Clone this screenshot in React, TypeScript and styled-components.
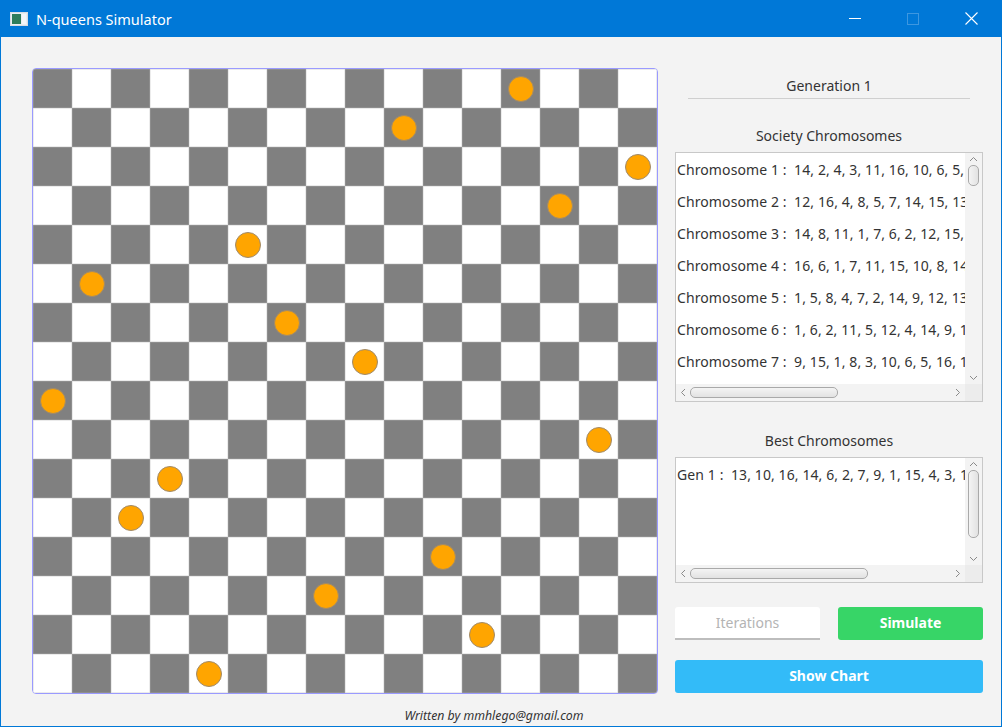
import React from "react";
import styled, { createGlobalStyle } from "styled-components";

const GlobalStyle = createGlobalStyle`
    html, body {
        margin: 0;
        padding: 0;
        background: #f3f3f3;
    }
    * {
        box-sizing: border-box;
    }
`

const Window = styled.div`
    width: 1002px;
    height: 727px;
    display: flex;
    flex-direction: column;
    background: #f3f3f3;
    border: 1px solid #0078d7;
    border-top: none;
    font-family: "Noto Sans", "Open Sans", sans-serif;
    color: #333;
    overflow: hidden;
`

const TitleBar = styled.div`
    height: 37px;
    flex: none;
    display: flex;
    align-items: center;
    background: #0078d7;
    color: #fff;
    margin: 0 -1px;
    padding-left: 10px;
`

const TitleText = styled.span`
    font-family: "Noto Sans", sans-serif;
    font-size: 14.5px;
    margin-left: 8px;
    flex: 1;
`

const WindowButton = styled.div`
    width: 58px;
    height: 37px;
    display: flex;
    align-items: center;
    justify-content: center;
`

const Main = styled.div`
    flex: 1;
    display: flex;
    padding: 31px 18px 0 31px;
`

const Board = styled.div`
    width: 626px;
    height: 626px;
    flex: none;
    display: grid;
    grid-template-columns: repeat(16, 39px);
    grid-template-rows: repeat(16, 39px);
    border: 1px solid #9a9aff;
    border-radius: 4px;
    overflow: hidden;
    background: #fff;
`

const Cell = styled.div<{ $dark: boolean }>`
    display: flex;
    align-items: center;
    justify-content: center;
    background: ${p => p.$dark ? "#808080" : "#ffffff"};
    box-shadow: inset 0 0 0 0.5px ${p => p.$dark ? "#9c9c9c" : "#d8d8d8"};
`

const Queen = styled.div`
    width: 26px;
    height: 26px;
    border-radius: 50%;
    background: #ffa500;
    border: 1px solid #a08a6a;
`

const Side = styled.div`
    width: 308px;
    margin-left: 17px;
    display: flex;
    flex-direction: column;
`

const GenerationHeader = styled.div`
    margin: 8px 13px 0;
    height: 23px;
    border-bottom: 1px solid #cfcfcf;
    text-align: center;
    font-size: 14px;
    line-height: 20px;
`

const SectionLabel = styled.div<{ $top: number }>`
    margin-top: ${p => p.$top}px;
    text-align: center;
    font-size: 14px;
    line-height: 20px;
`

const ListBox = styled.div<{ $height: number; $top: number }>`
    margin-top: ${p => p.$top}px;
    height: ${p => p.$height}px;
    border: 1px solid #c8c8c8;
    background: #fff;
    display: grid;
    grid-template-columns: 1fr 17px;
    grid-template-rows: 1fr 17px;
`

const ListContent = styled.div`
    overflow: hidden;
    padding: 5px 0 0 1px;
`

const ListRow = styled.div`
    height: 32px;
    line-height: 24px;
    font-size: 14px;
    letter-spacing: 0.1px;
    white-space: pre;
    color: #333;
`

const VScroll = styled.div`
    background: #f3f3f3;
    display: flex;
    flex-direction: column;
    align-items: center;
    padding: 3px 0;
`

const HScroll = styled.div`
    background: #f3f3f3;
    display: flex;
    align-items: center;
    padding: 0 4px;
`

const Corner = styled.div`
    background: #ececec;
`

const Arrow = styled.svg`
    flex: none;
`

const VThumb = styled.div<{ $height: number; $offset: number }>`
    width: 11px;
    height: ${p => p.$height}px;
    margin-top: ${p => p.$offset}px;
    border: 1px solid #a9a9a9;
    border-radius: 5px;
    background: linear-gradient(to right, #f4f4f4, #e2e2e2);
`

const HThumb = styled.div<{ $width: number }>`
    width: ${p => p.$width}px;
    height: 11px;
    margin-left: 4px;
    border: 1px solid #a9a9a9;
    border-radius: 5px;
    background: linear-gradient(#f4f4f4, #e2e2e2);
`

const Spacer = styled.div`
    flex: 1;
`

const Controls = styled.div`
    margin-top: 24px;
    display: flex;
    justify-content: space-between;
`

const IterationsInput = styled.input`
    width: 145px;
    height: 33px;
    border: none;
    border-bottom: 2px solid #bdbdbd;
    border-radius: 3px 3px 0 0;
    background: #fff;
    text-align: center;
    font-family: "Noto Sans", sans-serif;
    font-size: 14px;
    outline: none;

    &::placeholder {
        color: #b4b4b4;
    }
`

const ActionButton = styled.button<{ $color: string; $wide?: boolean }>`
    width: ${p => p.$wide ? "308px" : "145px"};
    height: 33px;
    border: none;
    border-radius: 3px;
    background: ${p => p.$color};
    color: #fff;
    font-family: "Noto Sans", sans-serif;
    font-weight: bold;
    font-size: 14px;
    padding: 0 0 2px;
`

const WideButtonRow = styled.div`
    margin-top: 20px;
`

const Footer = styled.div`
    height: 33px;
    flex: none;
    display: flex;
    justify-content: center;
    padding: 14px 14px 0 0;
    font-size: 12.3px;
    line-height: 16px;
    font-style: italic;
    color: #333;
`

const queens = [12, 9, 15, 13, 5, 1, 6, 8, 0, 14, 3, 2, 10, 7, 11, 4];

const society = [
    "14, 2, 4, 3, 11, 16, 10, 6, 5, 13, 1, 8, 7, 15, 12, 9",
    "12, 16, 4, 8, 5, 7, 14, 15, 13, 1, 3, 10, 6, 2, 9, 11",
    "14, 8, 11, 1, 7, 6, 2, 12, 15, 3, 16, 5, 9, 4, 10, 13",
    "16, 6, 1, 7, 11, 15, 10, 8, 14, 2, 4, 12, 3, 9, 5, 13",
    "1, 5, 8, 4, 7, 2, 14, 9, 12, 13, 16, 3, 6, 10, 15, 11",
    "1, 6, 2, 11, 5, 12, 4, 14, 9, 15, 3, 8, 10, 7, 13, 16",
    "9, 15, 1, 8, 3, 10, 6, 5, 16, 12, 2, 14, 4, 11, 7, 13",
    "3, 11, 7, 14, 2, 9, 16, 5, 12, 1, 6, 15, 10, 4, 8, 13",
];

const UpArrow = () => (
    <Arrow width="9" height="6" viewBox="0 0 9 6">
        <path d="M1 5 L4.5 1.5 L8 5" fill="none" stroke="#8a8a8a" strokeWidth="1" />
    </Arrow>
)

const DownArrow = () => (
    <Arrow width="9" height="6" viewBox="0 0 9 6">
        <path d="M1 1 L4.5 4.5 L8 1" fill="none" stroke="#8a8a8a" strokeWidth="1" />
    </Arrow>
)

const LeftArrow = () => (
    <Arrow width="6" height="9" viewBox="0 0 6 9">
        <path d="M5 1 L1.5 4.5 L5 8" fill="none" stroke="#8a8a8a" strokeWidth="1" />
    </Arrow>
)

const RightArrow = () => (
    <Arrow width="6" height="9" viewBox="0 0 6 9">
        <path d="M1 1 L4.5 4.5 L1 8" fill="none" stroke="#8a8a8a" strokeWidth="1" />
    </Arrow>
)

type ScrollListProps = {
    height: number;
    top: number;
    rows: string[];
    vThumb: number;
    vOffset: number;
    hThumb: number;
}

const ScrollList: React.FC<ScrollListProps> = ({ height, top, rows, vThumb, vOffset, hThumb }) => (
    <ListBox $height={height} $top={top}>
        <ListContent>
            {rows.map((r, i) => <ListRow key={i}>{r}</ListRow>)}
        </ListContent>
        <VScroll>
            <UpArrow />
            <VThumb $height={vThumb} $offset={vOffset} />
            <Spacer />
            <DownArrow />
        </VScroll>
        <HScroll>
            <LeftArrow />
            <HThumb $width={hThumb} />
            <Spacer />
            <RightArrow />
        </HScroll>
        <Corner />
    </ListBox>
)

const AppIcon = () => (
    <svg width="18" height="14" viewBox="0 0 18 14">
        <rect x="0.5" y="0.5" width="17" height="13" fill="#e9eef2" stroke="#d8dde2" />
        <rect x="2" y="2" width="9" height="10" fill="#2e7d5b" />
        <rect x="12" y="2" width="4" height="10" fill="#f4f7f9" />
    </svg>
)

export default function App() {
    const cells = [];
    for (let r = 0; r < 16; r++) {
        for (let c = 0; c < 16; c++) {
            cells.push(
                <Cell key={`${r}-${c}`} $dark={(r + c) % 2 === 0}>
                    {queens[r] === c && <Queen />}
                </Cell>
            );
        }
    }

    return (
        <>
            <GlobalStyle />
            <Window>
                <TitleBar>
                    <AppIcon />
                    <TitleText>N-queens Simulator</TitleText>
                    <WindowButton>
                        <svg width="12" height="2" viewBox="0 0 12 2"><rect width="12" height="1" fill="#fff" /></svg>
                    </WindowButton>
                    <WindowButton>
                        <svg width="12" height="12" viewBox="0 0 12 12"><rect x="0.5" y="0.5" width="11" height="11" fill="none" stroke="#3d97e0" /></svg>
                    </WindowButton>
                    <WindowButton style={{ marginRight: 2 }}>
                        <svg width="13" height="13" viewBox="0 0 13 13"><path d="M0.5 0.5 L12.5 12.5 M12.5 0.5 L0.5 12.5" stroke="#fff" strokeWidth="1.1" /></svg>
                    </WindowButton>
                </TitleBar>
                <Main>
                    <Board>{cells}</Board>
                    <Side>
                        <GenerationHeader>Generation 1</GenerationHeader>
                        <SectionLabel $top={27}>Society Chromosomes</SectionLabel>
                        <ScrollList
                            top={6}
                            height={250}
                            rows={society.map((s, i) => `Chromosome ${i + 1} :  ${s}`)}
                            vThumb={21}
                            vOffset={3}
                            hThumb={148}
                        />
                        <SectionLabel $top={29}>Best Chromosomes</SectionLabel>
                        <ScrollList
                            top={6}
                            height={126}
                            rows={["Gen 1 :  13, 10, 16, 14, 6, 2, 7, 9, 1, 15, 4, 3, 12, 5, 8, 11"]}
                            vThumb={68}
                            vOffset={3}
                            hThumb={178}
                        />
                        <Controls>
                            <IterationsInput placeholder="Iterations" />
                            <ActionButton $color="#37d567">Simulate</ActionButton>
                        </Controls>
                        <WideButtonRow>
                            <ActionButton $color="#33bbf8" $wide>Show Chart</ActionButton>
                        </WideButtonRow>
                    </Side>
                </Main>
                <Footer>Written by mmhlego@gmail.com</Footer>
            </Window>
        </>
    );
}
